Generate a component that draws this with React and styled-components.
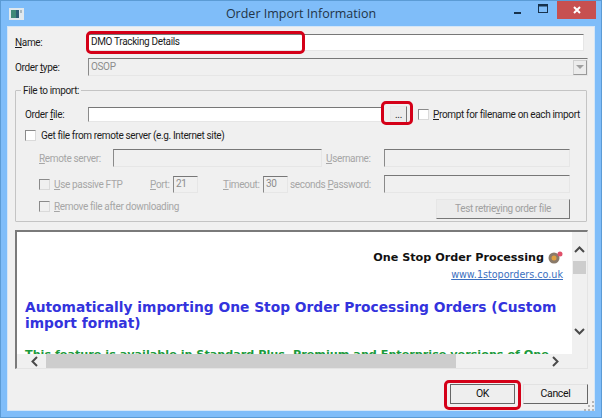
import styled, { createGlobalStyle } from "styled-components";

const Global = createGlobalStyle`
  html, body { margin: 0; padding: 0; background: #7fbdf9; }
  * { box-sizing: border-box; }
`;

const Win = styled.div`
  position: relative;
  width: 602px;
  height: 418px;
  display: flex;
  flex-direction: column;
  background: #7fbdf9;
  border: 1px solid #5b9bd5;
  font-family: Roboto, "Liberation Sans", Arial, sans-serif;
  font-size: 10px;
  letter-spacing: -0.35px;
  color: #1c1c1c;
  overflow: hidden;
`;

const TitleBar = styled.div`
  height: 25px;
  flex: none;
  display: grid;
  grid-template-columns: 1fr auto 1fr;
  align-items: start;
`;

const AppIcon = styled.svg`
  margin: 7px 0 0 8px;
  width: 15px;
  height: 12px;
`;

const Title = styled.div`
  text-align: center;
  font-family: "Open Sans", sans-serif;
  font-size: 12.5px;
  letter-spacing: 0;
  line-height: 26px;
  color: #1f3447;
`;

const WinControls = styled.div`
  display: flex;
  align-items: flex-start;
  justify-content: flex-end;
  margin-right: 5px;
`;

const WinBtn = styled.div`
  width: ${(p) => p.$w}px;
  height: 18px;
  display: flex;
  align-items: center;
  justify-content: center;
`;

const CloseBtn = styled(WinBtn)`
  background: #c75050;
`;

const Client = styled.div`
  flex: 1;
  margin: 0 6px 6px 6px;
  background: #f0f0f0;
  padding: 6px 0 0 7px;
  border: 1px solid #d4e6f7;
  display: flex;
  flex-direction: column;
`;

const FormRow = styled.div`
  display: flex;
  align-items: center;
  height: 18px;
  margin-bottom: ${(p) => p.$gap || 0}px;
  margin-right: ${(p) => p.$right || 0}px;
`;

const RowLabel = styled.span`
  width: ${(p) => p.$w || 73}px;
  flex: none;
  white-space: nowrap;
  margin-left: ${(p) => p.$left || 0}px;
  color: ${(p) => (p.$off ? "#a6a6a6" : "#1c1c1c")};
`;

const Sunken = styled.div`
  height: ${(p) => p.$h || 17}px;
  width: ${(p) => (p.$w ? `${p.$w}px` : "auto")};
  flex: ${(p) => (p.$w ? "none" : 1)};
  background: ${(p) => (p.$off ? "#f0f0f0" : "#fff")};
  border-top: 1px solid #777;
  border-left: 1px solid #8a8a8a;
  border-right: 1px solid #e6e6e6;
  border-bottom: 1px solid #e6e6e6;
  color: ${(p) => (p.$off ? "#8c8c8c" : "#1c1c1c")};
  padding-left: 2px;
  line-height: 14px;
  white-space: nowrap;
  display: flex;
  align-items: center;
  justify-content: space-between;
`;

const ComboArrow = styled.div`
  width: 14px;
  height: 15px;
  background: #ececec;
  border: 1px solid #d0d0d0;
  border-right-color: #999;
  border-bottom-color: #999;
  display: flex;
  align-items: center;
  justify-content: center;
  &::after {
    content: "";
    border-left: 4px solid transparent;
    border-right: 4px solid transparent;
    border-top: 4px solid #a0a0a0;
  }
`;

const Group = styled.fieldset`
  margin: 8px 0 0 0;
  width: 572px;
  height: 138px;
  border: 1px solid #c4c4c4;
  border-radius: 1px;
  padding: 8px 8px 0 9px;
  display: flex;
  flex-direction: column;
  min-width: 0;
`;

const Legend = styled.legend`
  padding: 0 2px;
  margin-left: -4px;
  line-height: 13px;
`;

const Browse = styled.div`
  width: 17px;
  height: 17px;
  margin-left: 7px;
  flex: none;
  background: #ececec;
  border: 1px solid #e8e8e8;
  border-right-color: #777;
  border-bottom-color: #777;
  text-align: center;
  line-height: 15px;
`;

const Check = styled.span`
  display: inline-block;
  flex: none;
  width: 11px;
  height: 11px;
  margin-left: ${(p) => p.$left || 0}px;
  margin-right: ${(p) => p.$right || 5}px;
  background: ${(p) => (p.$off ? "#f0f0f0" : "#fff")};
  border-top: 1px solid #8a8a8a;
  border-left: 1px solid #8a8a8a;
  border-right: 1px solid #dadada;
  border-bottom: 1px solid #dadada;
`;

const CheckText = styled.span`
  white-space: nowrap;
  flex: none;
  width: ${(p) => (p.$w ? `${p.$w}px` : "auto")};
  color: ${(p) => (p.$off ? "#a6a6a6" : "#1c1c1c")};
`;

const Gap = styled.span`
  width: ${(p) => p.$w}px;
  flex: none;
`;

const TestBtn = styled.div`
  width: 134px;
  height: 20px;
  flex: none;
  margin: 6px 0 0 auto;
  background: #ececec;
  border: 1px solid #e6e6e6;
  border-right-color: #777;
  border-bottom-color: #777;
  color: #a0a0a0;
  text-align: center;
  line-height: 18px;
`;

const HelpView = styled.div`
  margin-top: 8px;
  width: 573px;
  height: 139px;
  flex: none;
  position: relative;
  background: #fff;
  border-top: 2px solid #7a7a7a;
  border-left: 2px solid #7a7a7a;
  border-right: 1px solid #e4e4e4;
  border-bottom: 1px solid #e4e4e4;
  display: grid;
  grid-template-columns: 1fr 15px;
  grid-template-rows: 1fr 14px;
  min-height: 0;
  letter-spacing: 0;
`;

const HelpPage = styled.div`
  overflow: hidden;
  min-height: 0;
  padding: 18px 9px 0 8px;
  font-family: "DejaVu Sans", Verdana, sans-serif;
`;

const BrandLine = styled.div`
  display: flex;
  justify-content: flex-end;
  align-items: center;
  font-weight: bold;
  font-size: 11.2px;
  line-height: 15px;
  color: #111;
  gap: 4px;
`;

const SiteLink = styled.div`
  text-align: right;
  font-size: 9.6px;
  line-height: 12px;
  margin-top: 4px;
  color: #3b6fc0;
  text-decoration: underline;
`;

const Heading = styled.div`
  margin-top: 18px;
  font-weight: bold;
  font-size: 13.8px;
  line-height: 16px;
  color: #3333dd;
`;

const Notice = styled.div`
  margin-top: 17px;
  font-weight: bold;
  font-size: 11.2px;
  line-height: 14px;
  white-space: nowrap;
  color: #1b9a3c;
`;

const VScroll = styled.div`
  background: #f0f0f0;
  display: flex;
  flex-direction: column;
  align-items: center;
  padding-top: 13px;
`;

const Thumb = styled.div`
  width: 13px;
  height: 13px;
  background: #cdcdcd;
  margin-top: 5px;
`;

const HScroll = styled.div`
  grid-column: 1 / 3;
  background: #f0f0f0;
  display: flex;
  align-items: center;
  padding: 0 27px 0 0;
`;

const HThumb = styled.div`
  width: 410px;
  height: 14px;
  margin-left: 5px;
  background: #cdcdcd;
`;

const Footer = styled.div`
  display: flex;
  justify-content: flex-end;
  gap: 8px;
  margin-top: 15px;
  padding-right: 6px;
`;

const DlgBtn = styled.div`
  width: ${(p) => p.$w}px;
  height: 20px;
  background: #efefef;
  border: 1px solid #e2e2e2;
  border-right-color: #666;
  border-bottom-color: #666;
  text-align: center;
  line-height: 18px;
  font-size: 10.5px;
  color: #111;
  ${(p) => p.$def && "border-color: #666; background: #eee;"}
`;

const Grip = styled.svg`
  position: absolute;
  right: 6px;
  bottom: 6px;
  width: 11px;
  height: 11px;
`;

const Mark = styled.div`
  position: absolute;
  left: ${(p) => p.$x}px;
  top: ${(p) => p.$y}px;
  width: ${(p) => p.$w}px;
  height: ${(p) => p.$h}px;
  border: 3px solid #d40018;
  border-radius: 5px;
  pointer-events: none;
`;

const Chevron = ({ d, style }) => (
  <svg width={11} height={11} viewBox="0 0 11 11" style={style}>
    <path d={d} fill="none" stroke="#4a4a4a" strokeWidth="2" />
  </svg>
);

export default function App() {
  return (
    <Win>
      <Global />
      <TitleBar>
        <AppIcon viewBox="0 0 15 12">
          <rect width="15" height="12" fill="#dfe8ee" />
          <rect x="2" y="2" width="5" height="8" fill="#3f8a78" />
          <rect x="7" y="2" width="3" height="8" fill="#2c5f75" />
          <rect x="11" y="2" width="2" height="3" fill="#aab8c0" />
        </AppIcon>
        <Title>Order Import Information</Title>
        <WinControls>
          <WinBtn $w={26}>
            <svg width="9" height="9" viewBox="0 0 9 9">
              <rect x="1" y="6" width="7" height="2" fill="#17324d" />
            </svg>
          </WinBtn>
          <WinBtn $w={27}>
            <svg width="11" height="10" viewBox="0 0 11 10" style={{ marginBottom: 3 }}>
              <rect x="0.5" y="0.5" width="9" height="8" fill="none" stroke="#17324d" />
              <rect x="0.5" y="0.5" width="9" height="2" fill="#17324d" />
            </svg>
          </WinBtn>
          <CloseBtn $w={39}>
            <svg width="10" height="10" viewBox="0 0 10 10">
              <path d="M2 2l6 6M8 2l-6 6" stroke="#fff" strokeWidth="2" />
            </svg>
          </CloseBtn>
        </WinControls>
      </TitleBar>

      <Client>
        <FormRow $gap={7} $right={10}>
          <RowLabel>
            <u>N</u>ame:
          </RowLabel>
          <Sunken>DMO Tracking Details</Sunken>
        </FormRow>
        <FormRow $right={6}>
          <RowLabel>
            Order <u>t</u>ype:
          </RowLabel>
          <Sunken $off $h={18}>
            OSOP
            <ComboArrow />
          </Sunken>
        </FormRow>

        <Group>
          <Legend>File to import:</Legend>
          <FormRow $gap={3}>
            <RowLabel $w={63}>
              Order <u>f</u>ile:
            </RowLabel>
            <Sunken $w={295} $h={15}></Sunken>
            <Browse>...</Browse>
            <Check $left={11} $right={4} />
            <CheckText>
              <u>P</u>rompt for filename on each import
            </CheckText>
          </FormRow>
          <FormRow $gap={5}>
            <Check />
            <CheckText>Get file from remote server (e.g. Internet site)</CheckText>
          </FormRow>
          <FormRow $gap={8} $right={8}>
            <RowLabel $w={74} $left={14} $off>
              <u>R</u>emote server:
            </RowLabel>
            <Sunken $off $w={209} $h={18}></Sunken>
            <RowLabel $w={58} $left={4} $off>
              <u>U</u>sername:
            </RowLabel>
            <Sunken $off $h={18}></Sunken>
          </FormRow>
          <FormRow $gap={4} $right={8}>
            <Check $off $left={14} $right={4} />
            <CheckText $off $w={96}>
              <u>U</u>se passive FTP
            </CheckText>
            <RowLabel $w={23} $off>
              <u>P</u>ort:
            </RowLabel>
            <Sunken $off $w={25} $h={17}>21</Sunken>
            <Gap $w={25} />
            <RowLabel $w={40} $off>
              <u>T</u>imeout:
            </RowLabel>
            <Sunken $off $w={25} $h={17}>30</Sunken>
            <RowLabel $w={94} $left={2} $off>
              seconds <u>P</u>assword:
            </RowLabel>
            <Sunken $off $h={18}></Sunken>
          </FormRow>
          <FormRow $right={8}>
            <Check $off $left={14} $right={4} />
            <CheckText $off>
              <u>R</u>emove file after downloading
            </CheckText>
            <TestBtn>
              Test retrie<u>v</u>ing order file
            </TestBtn>
          </FormRow>
        </Group>

        <HelpView>
          <HelpPage>
            <BrandLine>
              One Stop Order Processing
              <svg width="15" height="13" viewBox="0 0 15 13">
                <circle cx="6" cy="7" r="5.5" fill="#8a7a6a" />
                <circle cx="6" cy="7" r="2.5" fill="#e0a040" />
                <circle cx="12" cy="3" r="2.5" fill="#e0506a" />
              </svg>
            </BrandLine>
            <SiteLink>www.1stoporders.co.uk</SiteLink>
            <Heading>
              Automatically importing One Stop Order Processing Orders (Custom
              import format)
            </Heading>
            <Notice>
              This feature is available in Standard Plus, Premium and Enterprise versions of One
            </Notice>
          </HelpPage>
          <VScroll>
            <Chevron d="M1 7l4.5-4.5L10 7" />
            <Thumb />
            <Chevron d="M1 3l4.5 4.5L10 3" style={{ marginTop: 52 }} />
          </VScroll>
          <HScroll>
            <Chevron d="M7 1L2.5 5.5 7 10" style={{ marginLeft: 13 }} />
            <HThumb />
            <Chevron d="M4 1l4.5 4.5L4 10" style={{ marginLeft: "auto" }} />
          </HScroll>
        </HelpView>

        <Footer>
          <DlgBtn $w={65} $def>OK</DlgBtn>
          <DlgBtn $w={65}>Cancel</DlgBtn>
        </Footer>
      </Client>

      <Grip viewBox="0 0 11 11">
        <path d="M8 1h2v2H8zM8 5h2v2H8zM4 5h2v2H4zM8 9h2v2H8zM4 9h2v2H4zM0 9h2v2H0z" fill="#b5b5b5" />
      </Grip>
      <Mark $x={85} $y={30} $w={219} $h={23} />
      <Mark $x={380} $y={100} $w={32} $h={24} />
      <Mark $x={443} $y={379} $w={77} $h={30} />
    </Win>
  );
}
